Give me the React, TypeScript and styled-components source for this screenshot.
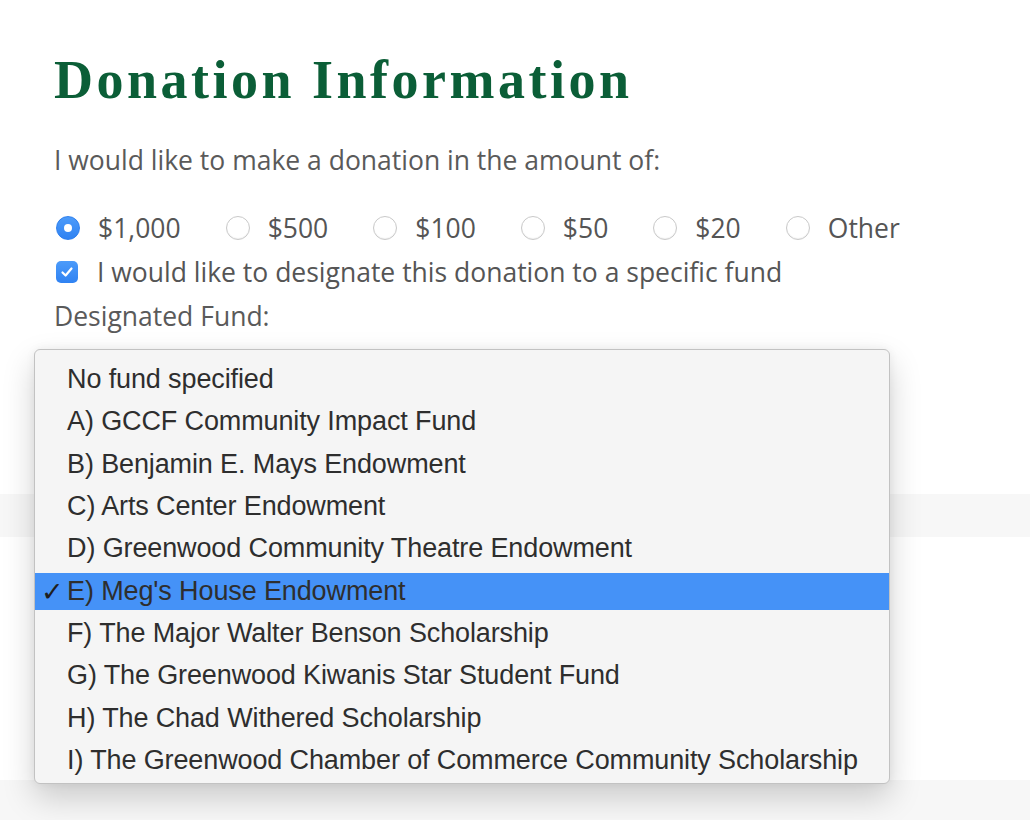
import React from "react";
import styled, { createGlobalStyle } from "styled-components";

const Global = createGlobalStyle`
  html, body { margin: 0; padding: 0; background: #ffffff; }
  body { font-family: "Open Sans", "Liberation Sans", sans-serif; }
`;

const Page = styled.div`
  position: relative;
  width: 1030px;
  height: 820px;
  overflow: hidden;
  background: #ffffff;
`;

const Content = styled.div`
  padding: 53px 0 0 54px;
  display: flex;
  flex-direction: column;
`;

const Heading = styled.h1`
  margin: 0;
  font-family: "Liberation Serif", "Times New Roman", serif;
  font-weight: 700;
  font-size: 54px;
  line-height: 54px;
  letter-spacing: 3.5px;
  color: #0b5e37;
`;

const Lead = styled.p`
  margin: 31px 0 0 0;
  font-size: 26.5px;
  line-height: 44px;
  color: #5a5a5a;
`;

const RadioRow = styled.div`
  margin-top: 24px;
  display: flex;
  align-items: center;
  height: 44px;
  gap: 45px;
  padding-left: 2px;
`;

const Option = styled.label`
  display: flex;
  align-items: center;
  gap: 18px;
  font-size: 26.5px;
  color: #555555;
`;

const Radio = styled.span<{ $checked?: boolean }>`
  width: 24px;
  height: 24px;
  box-sizing: border-box;
  border-radius: 50%;
  display: flex;
  align-items: center;
  justify-content: center;
  background: ${(p) => (p.$checked ? "linear-gradient(#4c9bfa, #2f82f2)" : "#ffffff")};
  border: 1px solid ${(p) => (p.$checked ? "#2f80ee" : "#c9c9c9")};
  box-shadow: ${(p) => (p.$checked ? "none" : "inset 0 -1px 1px rgba(0,0,0,0.06)")};
  &::after {
    content: "";
    display: ${(p) => (p.$checked ? "block" : "none")};
    width: 8px;
    height: 8px;
    border-radius: 50%;
    background: #ffffff;
  }
`;

const CheckRow = styled.label`
  display: flex;
  align-items: center;
  height: 44px;
  gap: 19px;
  padding-left: 2px;
  font-size: 26.5px;
  color: #555555;
`;

const CheckBox = styled.span`
  width: 22px;
  height: 22px;
  border-radius: 5px;
  background: linear-gradient(#4c9bfa, #2f82f2);
  display: flex;
  align-items: center;
  justify-content: center;
`;

const FieldLabel = styled.div`
  height: 44px;
  line-height: 44px;
  font-size: 26.5px;
  color: #5a5a5a;
`;

const Band = styled.div<{ $top: number; $height: number }>`
  margin-top: ${(p) => p.$top}px;
  height: ${(p) => p.$height}px;
  background: #f7f7f7;
`;

const Menu = styled.ul`
  position: absolute;
  left: 34px;
  top: 349px;
  width: 856px;
  height: 435px;
  box-sizing: border-box;
  margin: 0;
  padding: 11px 0 5px 0;
  list-style: none;
  display: flex;
  flex-direction: column;
  gap: 5.33px;
  background: #f5f5f5;
  border: 1px solid #c2c2c2;
  border-radius: 6px;
  box-shadow: 0 14px 32px rgba(0, 0, 0, 0.18), 0 0 10px rgba(0, 0, 0, 0.06);
  font-family: "Liberation Sans", Arial, sans-serif;
`;

const Item = styled.li<{ $active?: boolean }>`
  position: relative;
  height: 37px;
  line-height: 37px;
  padding-left: 32px;
  font-size: 27px;
  letter-spacing: -0.12px;
  color: #2e2e2e;
  white-space: nowrap;
  background: ${(p) => (p.$active ? "#4592f7" : "transparent")};
`;

const Tick = styled.span`
  position: absolute;
  left: 6px;
  top: 0;
  font-family: "DejaVu Sans", sans-serif;
  font-size: 27px;
  color: #1e1e1e;
`;

const amounts = ["$1,000", "$500", "$100", "$50", "$20", "Other"];

const funds = [
  "No fund specified",
  "A) GCCF Community Impact Fund",
  "B) Benjamin E. Mays Endowment",
  "C) Arts Center Endowment",
  "D) Greenwood Community Theatre Endowment",
  "E) Meg's House Endowment",
  "F) The Major Walter Benson Scholarship",
  "G) The Greenwood Kiwanis Star Student Fund",
  "H) The Chad Withered Scholarship",
  "I) The Greenwood Chamber of Commerce Community Scholarship",
];

export default function App() {
  return (
    <Page>
      <Global />
      <Content>
        <Heading>Donation Information</Heading>
        <Lead>I would like to make a donation in the amount of:</Lead>
        <RadioRow>
          {amounts.map((a, i) => (
            <Option key={a}>
              <Radio $checked={i === 0} />
              {a}
            </Option>
          ))}
        </RadioRow>
        <CheckRow>
          <CheckBox>
            <svg width="14" height="14" viewBox="0 0 14 14">
              <path d="M2.5 7.5 L5.6 10.5 L11.5 3.5" fill="none" stroke="#fff" strokeWidth="2.2" strokeLinecap="round" strokeLinejoin="round" />
            </svg>
          </CheckBox>
          I would like to designate this donation to a specific fund
        </CheckRow>
        <FieldLabel>Designated Fund:</FieldLabel>
      </Content>
      <Band $top={156} $height={43} />
      <Band $top={243} $height={40} />
      <Menu>
        {funds.map((f, i) => (
          <Item key={f} $active={i === 5}>
            {i === 5 && <Tick>✓</Tick>}
            {f}
          </Item>
        ))}
      </Menu>
    </Page>
  );
}
